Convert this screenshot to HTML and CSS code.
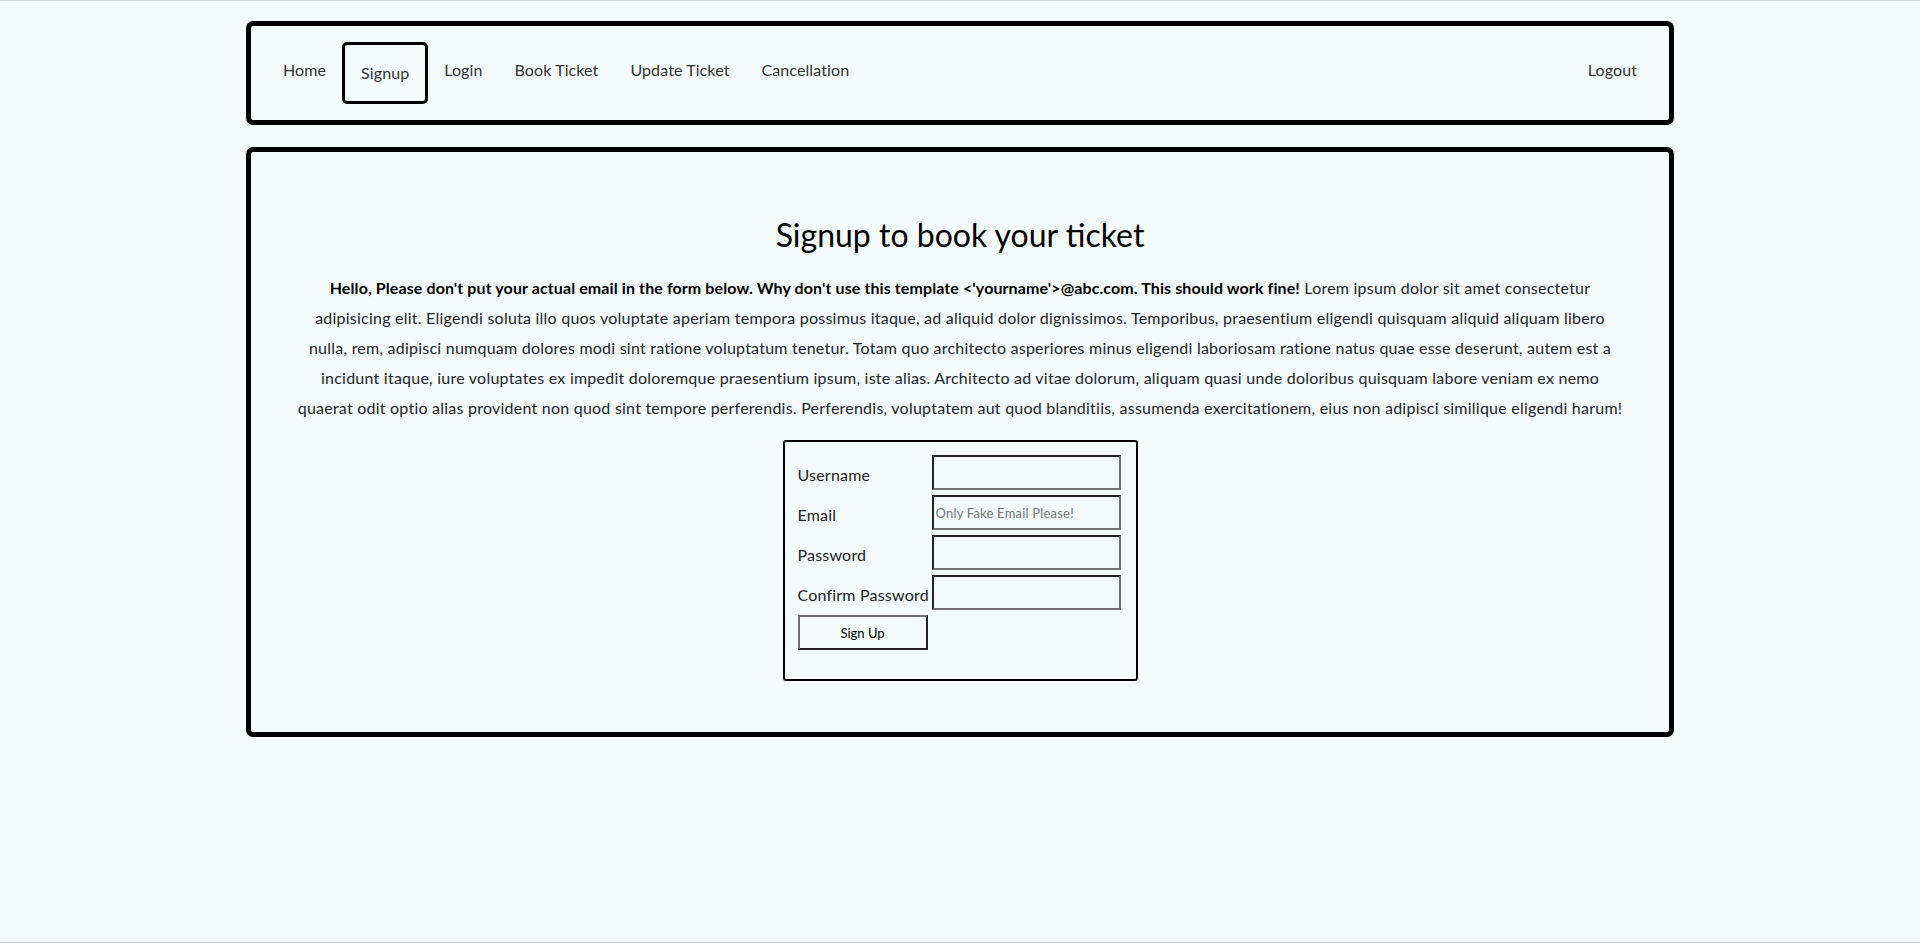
FILE: index.html
```html
<!DOCTYPE html>
<html lang="en">

<head>
    <meta charset="UTF-8">
    <title>Signup</title>

    <link rel="stylesheet" href="styles.css">
</head>

<body>
    <div class="page">
        <nav class="navbar">
            <a href="#" class="nav-link">Home</a>
            <a href="#" class="nav-link active">Signup</a>
            <a href="#" class="nav-link">Login</a>
            <a href="#" class="nav-link">Book Ticket</a>
            <a href="#" class="nav-link">Update Ticket</a>
            <a href="#" class="nav-link">Cancellation</a>
            <a href="#" class="nav-link logout">Logout</a>
        </nav>

        <main class="content">
            <h1>Signup to book your ticket</h1>
            <p class="intro">
                <strong>Hello, Please don't put your actual email in the form below. Why don't use this template &lt;'yourname'&gt;@abc.com. This should work fine!</strong>
                Lorem ipsum dolor sit amet consectetur adipisicing elit. Eligendi soluta illo quos voluptate aperiam tempora possimus itaque, ad aliquid dolor dignissimos. Temporibus, praesentium eligendi quisquam aliquid aliquam libero nulla, rem, adipisci numquam dolores modi sint ratione voluptatum tenetur. Totam quo architecto asperiores minus eligendi laboriosam ratione natus quae esse deserunt, autem est a incidunt itaque, iure voluptates ex impedit doloremque praesentium ipsum, iste alias. Architecto ad vitae dolorum, aliquam quasi unde doloribus quisquam labore veniam ex nemo quaerat odit optio alias provident non quod sint tempore perferendis. Perferendis, voluptatem aut quod blanditiis, assumenda exercitationem, eius non adipisci similique eligendi harum!
            </p>

            <form class="signup-form" onsubmit="return false">
                <label for="username">Username</label>
                <input type="text" id="username">
                <label for="email">Email</label>
                <input type="email" id="email" placeholder="Only Fake Email Please!">
                <label for="password">Password</label>
                <input type="password" id="password">
                <label for="confirm">Confirm Password</label>
                <input type="password" id="confirm">
                <button type="submit">Sign Up</button>
            </form>
        </main>
    </div>
</body>

</html>
```

FILE: styles.css
```css
html {
    background-color: #f4f9f9;
    font-family: Lato, "Liberation Sans", sans-serif;
    color: #212529;
}

body {
    margin: 0;
}

.page {
    min-height: 100vh;
    box-sizing: border-box;
    border-top: 1px solid #d5dadc;
    border-bottom: 1px solid #c8cccd;
    padding-top: 20px;
}

.navbar {
    width: 1428px;
    box-sizing: border-box;
    margin: 0 auto;
    display: flex;
    padding: 16px;
    border: 5px solid #000;
    border-radius: 7px;
}

.nav-link {
    padding: 16px;
    font-size: 16px;
    line-height: 24px;
    letter-spacing: 0.1px;
    color: #333;
    text-decoration: none;
}

.nav-link.active {
    border: 3px solid #000;
    border-radius: 5px;
}

.logout {
    margin-left: auto;
}

.content {
    width: 1428px;
    box-sizing: border-box;
    margin: 22px auto 0;
    padding: 64px 45px 51px;
    border: 5px solid #000;
    border-radius: 7px;
    text-align: center;
}

h1 {
    margin: 0 0 19px;
    font-size: 32px;
    line-height: 38px;
    font-weight: 400;
    color: #000;
}

.intro {
    margin: 0 0 17px;
    font-size: 16px;
    line-height: 30px;
    letter-spacing: 0.23px;
}

.intro strong {
    font-weight: 700;
    letter-spacing: 0.1px;
    color: #000;
}

.signup-form {
    width: 355px;
    box-sizing: border-box;
    margin: 0 auto;
    display: grid;
    grid-template-columns: 130px 189px;
    column-gap: 4px;
    row-gap: 5px;
    padding: 13px 15px 29px 13px;
    border: 2px solid #000;
    border-radius: 3px;
    text-align: left;
}

.signup-form label {
    align-self: center;
    padding-top: 3px;
    font-size: 16px;
    letter-spacing: 0.2px;
    white-space: nowrap;
    color: #222;
}

.signup-form input {
    height: 35px;
    box-sizing: border-box;
    margin: 0;
    padding: 1px 2px;
    border: 2px solid;
    border-color: #222 #707070 #707070 #222;
    background-color: transparent;
    font-family: inherit;
    font-size: 13px;
    letter-spacing: 0.2px;
}

.signup-form input::placeholder {
    color: #757575;
}

.signup-form button {
    height: 35px;
    margin: 0;
    border: 2px solid;
    border-color: #707070 #222 #222 #707070;
    background-color: transparent;
    font-family: inherit;
    font-size: 13px;
    color: #000;
    cursor: pointer;
}
```
